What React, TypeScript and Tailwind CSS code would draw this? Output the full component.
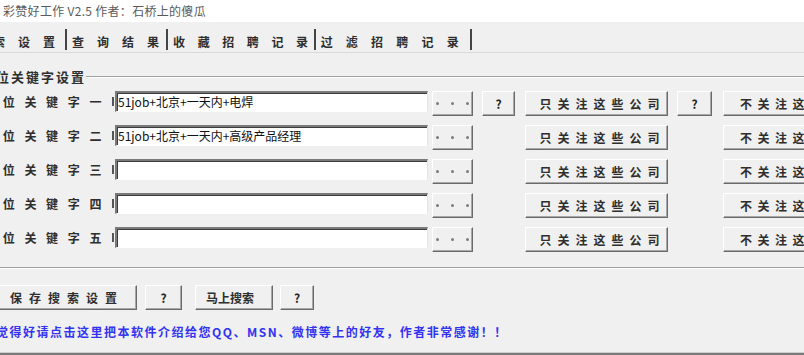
import React from "react";

const rows = ["一", "二", "三", "四", "五"];

function WinButton({ className, children }: { className?: string; children?: React.ReactNode }) {
    return (
        <div
            className={
                "flex h-[25px] shrink-0 items-center justify-center border border-t-white border-l-white border-r-[#6a6a6a] border-b-[#6a6a6a] bg-[#f0f0f0] shadow-[inset_-1px_-1px_0_#a8a8a8] " +
                (className ?? "")
            }
        >
            {children}
        </div>
    );
}

function Dots() {
    return (
        <div className="flex items-center gap-[12px]">
            <span className="h-[3px] w-[3px] rounded-full bg-[#7c7c7c]" />
            <span className="h-[3px] w-[3px] rounded-full bg-[#7c7c7c]" />
            <span className="h-[3px] w-[3px] rounded-full bg-[#7c7c7c]" />
        </div>
    );
}

function Help() {
    return <span className="text-[12px] font-bold text-[#222]">?</span>;
}

export default function App() {
    return (
        <div className="flex h-[355px] w-[804px] flex-col overflow-hidden bg-[#f0f0f0] font-['Noto_Sans_CJK_SC',sans-serif] text-[#2e2e2e]">
            {/* title */}
            <div className="flex h-[22px] shrink-0 items-center bg-white pl-[3px] text-[12px] tracking-[0.3px] text-[#5a5a5a]">
                彩赞好工作 V2.5 作者：石桥上的傻瓜
            </div>

            {/* tabs */}
            <div className="flex h-[31px] shrink-0 items-end border-b border-[#dadada] text-[12px] font-semibold">
                <div className="-ml-[32px] flex items-center">
                    <span className="pt-[4px] leading-[21px] tracking-[13px]">搜索设置</span>
                    <span className="-ml-[3px] mr-[5px] h-[21px] w-[2px] bg-[#444]" />
                    <span className="pt-[4px] leading-[21px] tracking-[13px]">查询结果</span>
                    <span className="-ml-[6px] mr-[5px] h-[21px] w-[2px] bg-[#444]" />
                    <span className="pt-[4px] leading-[21px] tracking-[12.6px]">收藏招聘记录</span>
                    <span className="-ml-[7px] mr-[5px] h-[21px] w-[2px] bg-[#444]" />
                    <span className="pt-[4px] leading-[21px] tracking-[13.2px]">过滤招聘记录</span>
                    <span className="-ml-[2px] h-[21px] w-[2px] bg-[#444]" />
                </div>
            </div>

            {/* group box header */}
            <div className="mt-[16px] flex h-[16px] shrink-0 items-center">
                <span className="-ml-[19px] text-[13px] leading-[16px] font-semibold tracking-[2px]">职位关键字设置</span>
                <div className="flex flex-1 flex-col">
                    <div className="h-px bg-[#a0a0a0]" />
                    <div className="h-px bg-white" />
                </div>
            </div>

            {/* keyword rows */}
            <div className="mt-[6px] flex shrink-0 flex-col gap-[9px]">
                {rows.map((n, i) => (
                    <div key={n} className="flex h-[25px] items-start">
                        <div className="-ml-[19px] flex w-[134px] shrink-0 items-center justify-between overflow-hidden whitespace-nowrap">
                            <span className="text-[12px] leading-[21px] font-semibold tracking-[9.7px]">职位关键字{n}</span>
                            <span className="mr-[1px] h-[9px] w-[2px] bg-[#555]" />
                        </div>
                        <div className="flex h-[21px] w-[313px] shrink-0 items-center border-t-2 border-l-2 border-r border-b border-t-[#7a7a7a] border-l-[#7a7a7a] border-r-[#e4e4e4] border-b-white bg-white pl-[1px] text-[12px] text-[#111] shadow-[inset_1px_1px_0_#3c3c3c]">
                            {i === 0 && "51job+北京+一天内+电焊"}
                            {i === 1 && "51job+北京+一天内+高级产品经理"}
                        </div>
                        <WinButton className="ml-[4px] w-[41px]">
                            <Dots />
                        </WinButton>
                        {i === 0 ? (
                            <WinButton className="ml-[9px] w-[33px]">
                                <Help />
                            </WinButton>
                        ) : (
                            <div className="ml-[9px] w-[33px] shrink-0" />
                        )}
                        <WinButton className="ml-[10px] w-[143px] pl-[12px] text-[12px] font-semibold tracking-[6px]">
                            只关注这些公司
                        </WinButton>
                        {i === 0 ? (
                            <WinButton className="ml-[9px] w-[35px]">
                                <Help />
                            </WinButton>
                        ) : (
                            <div className="ml-[9px] w-[35px] shrink-0" />
                        )}
                        <WinButton className="ml-[11px] w-[143px] justify-start pl-[16px] text-[12px] font-semibold tracking-[5.5px]">
                            不关注这些公司
                        </WinButton>
                    </div>
                ))}
            </div>

            {/* group box bottom */}
            <div className="mt-[15px] flex shrink-0 flex-col">
                <div className="h-px bg-[#a0a0a0]" />
                <div className="h-px bg-white" />
            </div>

            {/* actions */}
            <div className="mt-[16px] flex shrink-0 items-center">
                <WinButton className="-ml-[3px] w-[140px] justify-start pl-[12px] text-[12px] font-semibold tracking-[7px]">
                    保存搜索设置
                </WinButton>
                <WinButton className="ml-[8px] w-[37px]">
                    <Help />
                </WinButton>
                <WinButton className="ml-[13px] w-[78px] pr-[8px] text-[12px] font-semibold">
                    马上搜索
                </WinButton>
                <WinButton className="ml-[7px] w-[34px]">
                    <Help />
                </WinButton>
            </div>

            <div className="-ml-[4px] mt-[15px] shrink-0 whitespace-nowrap text-[12px] leading-[14px] font-bold tracking-[1.5px] text-[#3333f0]">
                觉得好请点击这里把本软件介绍给您QQ、MSN、微博等上的好友，作者非常感谢！！
            </div>

            <div className="mt-auto flex shrink-0 flex-col">
                <div className="h-px bg-[#d0d0d0]" />
                <div className="h-[2px] bg-[#7a7a7a]" />
            </div>
        </div>
    );
}
